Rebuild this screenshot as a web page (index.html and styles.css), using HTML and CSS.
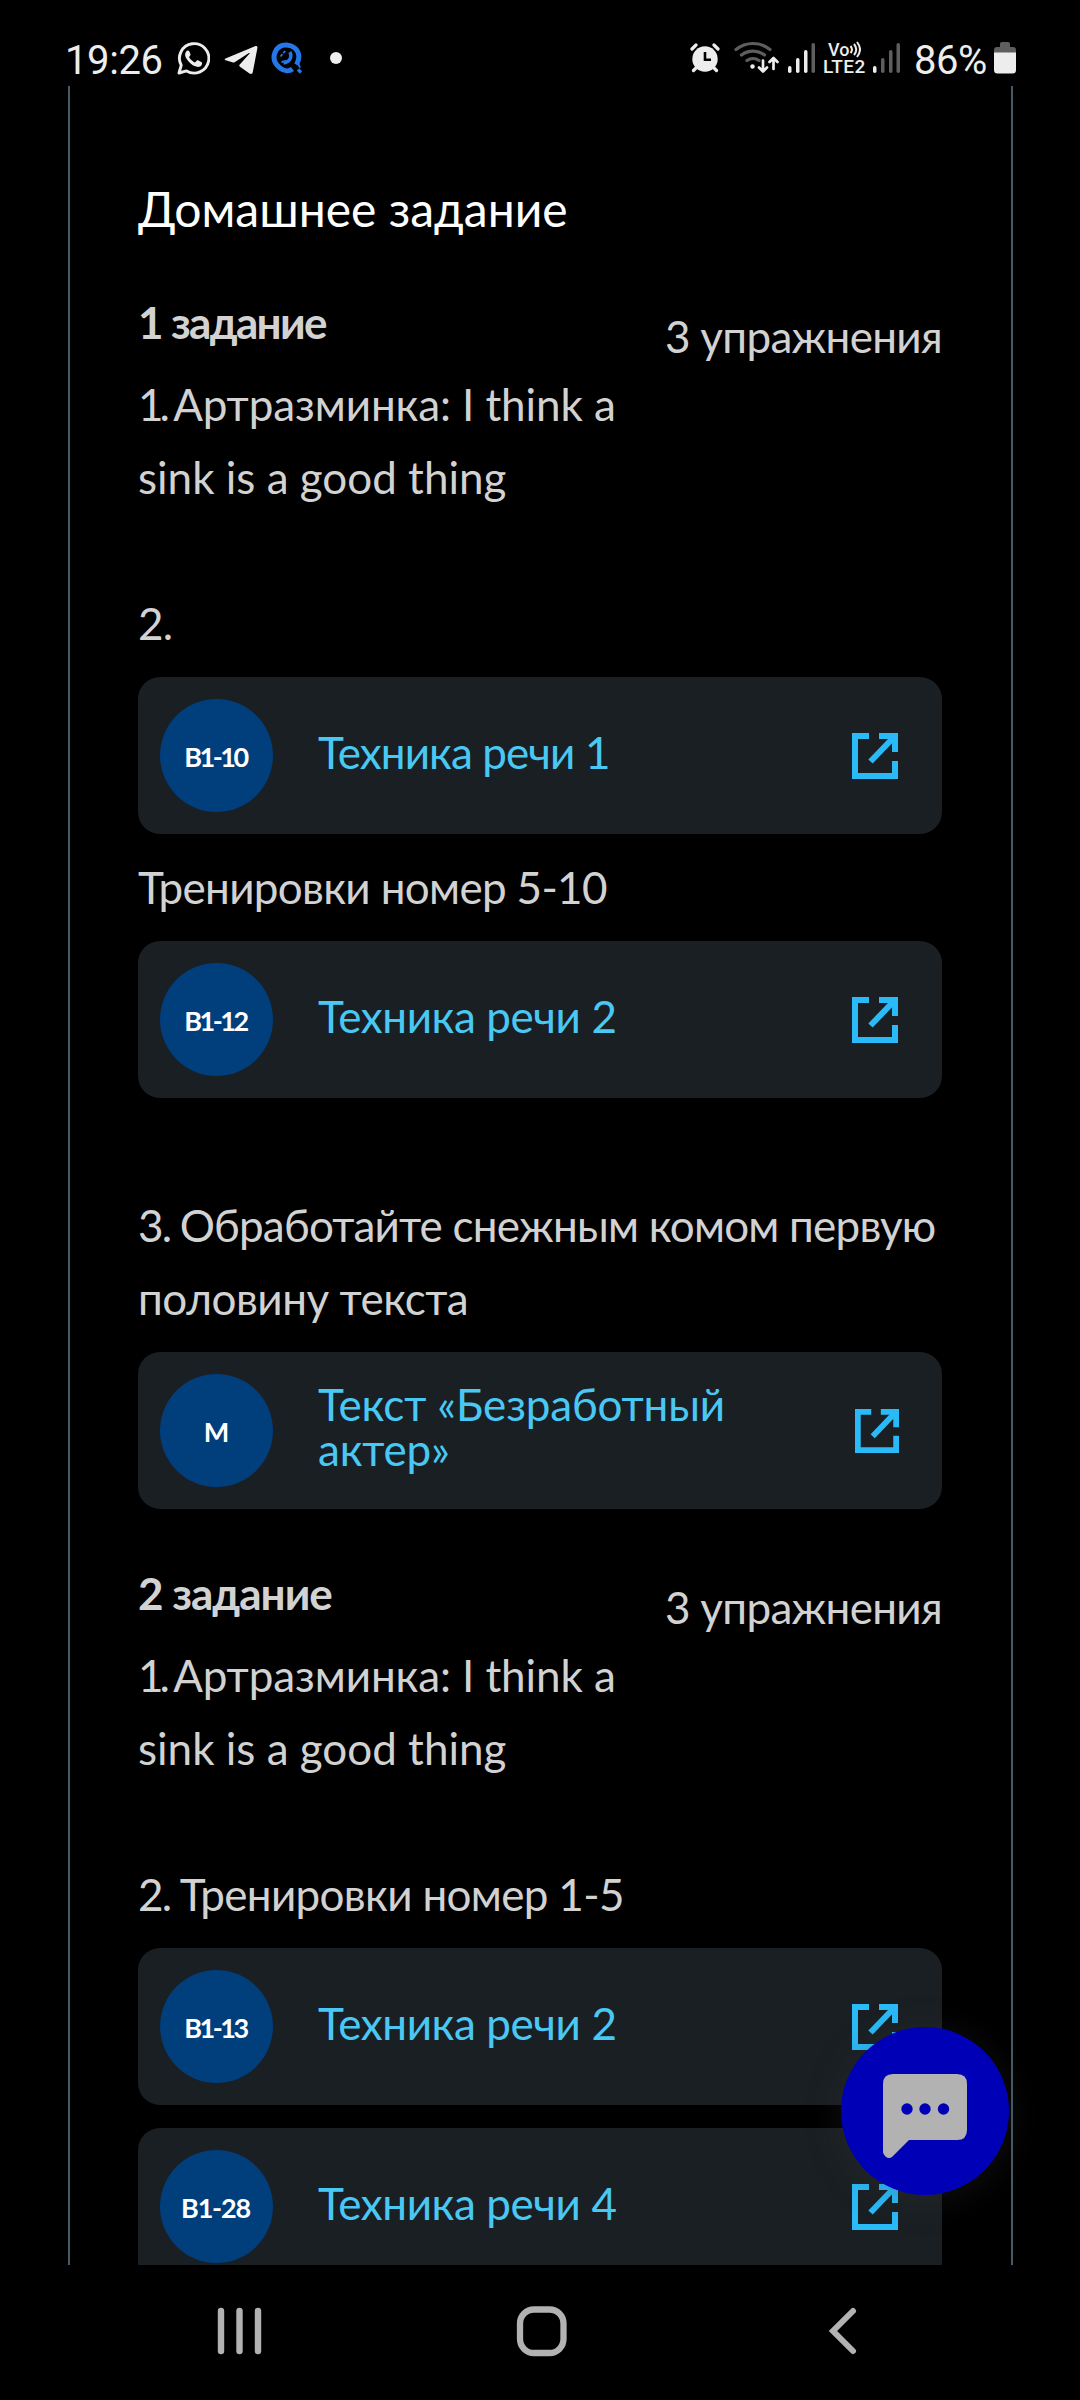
FILE: index.html
```html
<!DOCTYPE html>
<html lang="ru">
<head>
<meta charset="utf-8">
<title>Домашнее задание</title>
<link rel="stylesheet" href="styles.css">
</head>
<body>
<svg class="defs" aria-hidden="true">
  <symbol id="open" viewBox="0 0 46 46">
    <path d="M17 3H3v40h40V28M27 3h16v16" fill="none" stroke="currentColor" stroke-width="6"/>
    <path d="M18.500 28.500 42 4" fill="none" stroke="currentColor" stroke-width="6"/>
  </symbol>
</svg>

<header class="status">
  <span class="clock">19:26</span>
  <svg class="i-wa" viewBox="0 0 33 33" width="33" height="33"><path d="M2 31 4.200 23.300A14.700 14.700 0 1 1 9.500 28.900Z" fill="none" stroke="#ededed" stroke-width="2.900" stroke-linejoin="round"/><path d="M11.300 8.500c-.8-.2-1.500.1-2.100.9-1.600 2-1.400 4.600.3 7.300 2.300 3.700 5.400 6.600 9.600 7.900 2.400.7 4.700.1 5.600-1.700.4-.9.500-1.800.3-2.300-.3-.5-3.700-2.200-4.400-2.300-.9-.2-1.900 2.300-2.700 2.200-1.200-.2-5.500-3.900-5.800-5.200-.1-.6 1.500-1.900 1.500-2.700-.1-.8-1.400-3.900-2.300-4.100Z" fill="#ededed"/></svg>
  <svg class="i-tg" viewBox="0 0 34 30" width="34" height="30"><path d="M1.500 13.500 31 1.200c1.600-.6 2.700.2 2.400 1.900l-4.600 24c-.4 2-1.600 2.400-3.300 1.500L16 21.700c-1-.7-1-1.500-.2-2.300L25.600 8.600c.5-.6 0-.9-.7-.5L11 17c-.9.600-1.700.6-2.700.3L1.700 15.200c-1.300-.4-1.300-1.100-.2-1.700Z" fill="#ededed"/></svg>
  <svg class="i-qr" viewBox="0 0 32 32" width="32" height="32"><path d="M21.500 27C18.500 29.500 13.500 29.500 9.300 26.300 3.700 22 1.700 16.500 4 10.500 6 5 11 2.800 16 3c6 .6 10.900 4.500 11.700 10.500.5 4-.6 6.500-2.200 9.300" fill="none" stroke="#2477e8" stroke-width="5"/><path d="M27 27.500l3 3M27.500 24.500l1.800-.8" stroke="#2477e8" stroke-width="3.200"/><path d="M18.800 10c2.500 4 1 9.500-6.300 11" fill="none" stroke="#2477e8" stroke-width="3.400"/><path d="M9.700 14.500l1.600-2.500M12.200 11l2-1.800M15 19l-4.500 1" stroke="#2477e8" stroke-width="1.800"/></svg>
  <i class="dot"></i>
  <span class="grow"></span>
  <svg class="i-al" viewBox="0 0 30 30" width="30" height="30"><circle cx="15" cy="16" r="12.700" fill="#ededed"/><path d="M2 6l4-4M28 6l-4-4M3.500 27.500l4-4M26.500 27.500l-4-4" stroke="#ededed" stroke-width="3.200" stroke-linecap="round"/><path d="M15 9v7.800h6" fill="none" stroke="#000" stroke-width="2.600"/></svg>
  <svg class="i-wf" viewBox="0 0 45 34" width="45" height="34"><g fill="none" stroke="#5e5e5e" stroke-width="3.200" stroke-linecap="round"><path d="M2 9.500a27 27 0 0 1 34 0M7.500 15a19 19 0 0 1 23 0M13 20.500a10 10 0 0 1 12 0"/></g><circle cx="18.500" cy="26.500" r="2.200" fill="#ededed"/><path d="M29 20.500V31M25 27.500l4 4 4-4M39.500 29V18.500M35.500 22l4-4 4 4" fill="none" stroke="#ededed" stroke-width="2.700" stroke-linecap="round" stroke-linejoin="round"/></svg>
  <svg class="i-s1" viewBox="0 0 28 30" width="28" height="30"><g fill="#ededed"><rect x="0" y="23" width="3.500" height="7" rx="1.700"/><rect x="8" y="15" width="3.500" height="15" rx="1.700"/><rect x="16" y="7" width="3.500" height="23" rx="1.700"/></g><rect x="23.500" width="3.500" height="30" rx="1.700" fill="#5e5e5e"/></svg>
  <span class="lte"><span class="vo">Vo<svg viewBox="0 0 12 17" width="12" height="17"><path d="M1.500 5q3 3.500 0 7M5 3q4.500 5.500 0 11M8 1q6 7.500 0 15" fill="none" stroke="#ededed" stroke-width="2"/></svg></span><span>LTE2</span></span>
  <svg class="i-s2" viewBox="0 0 28 30" width="28" height="30"><rect y="23" width="3.500" height="7" rx="1.700" fill="#ededed"/><g fill="#5e5e5e"><rect x="8" y="15" width="3.500" height="15" rx="1.700"/><rect x="16" y="7" width="3.500" height="23" rx="1.700"/><rect x="23.500" width="3.500" height="30" rx="1.700"/></g></svg>
  <span class="percent">86%</span>
  <svg class="i-bt" viewBox="0 0 22 32" width="22" height="32"><path d="M0 12V8q0-3 3-3h3V2q0-2 2-2h6q2 0 2 2v3h3q3 0 3 3v4Z" fill="#5e5e5e"/><path d="M0 10.500h22V28q0 3.500-3.500 3.500h-15Q0 31.500 0 28Z" fill="#ededed"/></svg>
</header>

<main class="panel">
  <h1 class="heading">Домашнее задание</h1>

  <section class="task">
    <div class="top">
      <div class="lead">
        <h2 class="t-bold">1 задание</h2>
        <p class="text"><span class="intro"><span class="num">1. </span>Артразминка: I think a</span><br>sink is a good thing</p>
      </div>
      <p class="count">3 упражнения</p>
    </div>
    <p class="text gap tight">2.</p>
    <a class="card"><span class="badge">B1-10</span><span class="name one">Техника речи 1</span><svg class="open"><use href="#open"/></svg></a>
    <p class="text tight">Тренировки номер 5-10</p>
    <a class="card"><span class="badge">B1-12</span><span class="name">Техника речи 2</span><svg class="open"><use href="#open"/></svg></a>
    <p class="text gap-card"><span class="long"><span class="num-soft">3. </span>Обработайте снежным комом первую</span><br><span class="half">половину текста</span></p>
    <a class="card"><span class="badge single">M</span><span class="name multi">Текст «Безработный<br>актер»</span><svg class="open small"><use href="#open"/></svg></a>
  </section>

  <section class="task">
    <div class="top">
      <div class="lead">
        <h2 class="t-bold second">2 задание</h2>
        <p class="text"><span class="intro"><span class="num">1. </span>Артразминка: I think a</span><br>sink is a good thing</p>
      </div>
      <p class="count">3 упражнения</p>
    </div>
    <p class="text gap tight"><span class="num-soft">2. </span>Тренировки номер 1-5</p>
    <a class="card"><span class="badge">B1-13</span><span class="name">Техника речи 2</span><svg class="open"><use href="#open"/></svg></a>
    <a class="card"><span class="badge wide">B1-28</span><span class="name">Техника речи 4</span><svg class="open"><use href="#open"/></svg></a>
  </section>
</main>

<nav class="nav">
  <svg viewBox="0 0 46 52" width="46" height="52"><path d="M4 6v40M22.500 6v40M41 6v40" stroke="#b2b2b2" stroke-width="6.400" stroke-linecap="round"/></svg>
  <svg viewBox="0 0 52 52" width="52" height="52"><rect x="4" y="4.500" width="43.500" height="43.500" rx="14" fill="none" stroke="#b2b2b2" stroke-width="6.300"/></svg>
  <svg viewBox="0 0 30 52" width="30" height="52"><path d="M25 6 5 26l20 20" fill="none" stroke="#b2b2b2" stroke-width="6" stroke-linecap="round"/></svg>
</nav>

<button class="chat" aria-label="Чат">
  <svg viewBox="0 0 84 84" width="84" height="84"><path d="M10 0h64q10 0 10 10v46q0 10-10 10H26L9.500 82.500Q6 85.500 2.500 82.500 0 80.500 0 78V10Q0 0 10 0Z" fill="#b2b2b2"/><g fill="#0000b6"><circle cx="24" cy="35" r="5.700"/><circle cx="42" cy="35" r="5.700"/><circle cx="60.500" cy="35" r="5.700"/></g></svg>
</button>
</body>
</html>
```
FILE: styles.css
```css
* { box-sizing: border-box; margin: 0; padding: 0; }

body {
  display: flex;
  flex-direction: column;
  height: 2400px;
  overflow: hidden;
  background: #000;
  color: #d2d2d2;
  font-family: Lato, sans-serif;
  font-size: 44px;
}

.defs { position: absolute; width: 0; height: 0; }

/* Status bar */
.status {
  flex: none;
  display: flex;
  align-items: flex-start;
  height: 86px;
  padding: 0 64px 0 65px;
  color: #ededed;
  font-family: Roboto, sans-serif;
}
.status > svg { flex: none; }
.clock { width: 112px; margin-top: 37px; font-size: 40px; line-height: 47px; letter-spacing: -0.400px; }
.i-wa { margin-top: 42px; }
.i-tg { margin: 45px 0 0 14px; }
.i-qr { margin: 42px 0 0 13px; }
.dot { width: 12px; height: 12px; margin: 52px 0 0 27px; border-radius: 50%; background: #ededed; }
.grow { flex: 1; }
.i-al { margin: 43px 14px 0 0; }
.i-wf { margin: 40px 9px 0 0; }
.i-s1 { margin: 43px 7px 0 0; }
.lte { display: flex; flex-direction: column; width: 43px; margin: 41px 7px 0 0; font-size: 19px; font-weight: 500; line-height: 17px; letter-spacing: 0.400px; }
.vo { display: flex; padding-left: 5px; font-size: 18px; letter-spacing: 0; }
.i-s2 { margin: 43px 13px 0 0; }
.percent { width: 80px; margin-top: 37px; font-size: 40px; line-height: 47px; letter-spacing: -0.500px; }
.i-bt { margin-top: 42px; }

/* Page panel */
.panel {
  flex: none;
  height: 2179px;
  margin: 0 67px 0 68px;
  padding: 92px 69px 0 68px;
  border: solid #475b66;
  border-width: 0 2px;
  overflow: hidden;
}
.heading { color: #fff; font-size: 48px; font-weight: 400; line-height: 62px; }
.task { margin-top: 46px; }
.task + .task { margin-top: 48px; }
.top { display: flex; justify-content: space-between; }
.t-bold { margin-bottom: 9px; font-size: 44px; font-weight: 700; line-height: 73px; letter-spacing: -1.660px; }
.second { letter-spacing: -1px; }
.text { line-height: 73px; white-space: nowrap; }
.intro { letter-spacing: -0.100px; }
.num { letter-spacing: -4px; }
.num-soft { letter-spacing: -1.800px; }
.tight { letter-spacing: -0.660px; }
.long { letter-spacing: -0.780px; }
.half { letter-spacing: -0.450px; }
.gap { margin-top: 73px; }
.card + .gap-card { margin-top: 91px; }
.count { padding-top: 14px; line-height: 73px; letter-spacing: -0.680px; white-space: nowrap; }

.card {
  display: flex;
  align-items: center;
  height: 157px;
  margin: 17px 0;
  padding: 0 44px 0 22px;
  border-radius: 22px;
  background: #1a1f23;
  color: #4ac8f4;
}
.card + .card { margin-top: 23px; }
.badge {
  flex: none;
  width: 113px;
  height: 113px;
  margin-right: 45px;
  border-radius: 50%;
  background: #003e7c;
  color: #fff;
  font-size: 27px;
  font-weight: 700;
  line-height: 115px;
  letter-spacing: -2.500px;
  text-align: center;
  text-indent: -2px;
}
.wide { letter-spacing: -1.200px; }
.single { letter-spacing: 0; text-indent: 0; }
.name { flex: 1; margin-top: -7px; line-height: 45px; letter-spacing: -0.400px; white-space: nowrap; }
.one { letter-spacing: -0.900px; }
.multi { letter-spacing: -0.150px; }
.open { flex: none; width: 46px; height: 46px; color: #2bbaf8; }
.small { width: 44px; height: 44px; margin-right: -1px; }

/* System navigation */
.nav { flex: 1; display: grid; grid-template-columns: 299px 312px 30px; padding: 40px 0 0 217px; }

/* Chat button floats over the list */
.chat {
  position: absolute;
  left: 841px;
  top: 2027px;
  display: flex;
  align-items: center;
  justify-content: center;
  width: 168px;
  height: 168px;
  padding-top: 10px;
  border: 0;
  border-radius: 50%;
  background: #0000b6;
  box-shadow: 0 4px 36px rgba(60, 60, 60, 0.280);
}
```
